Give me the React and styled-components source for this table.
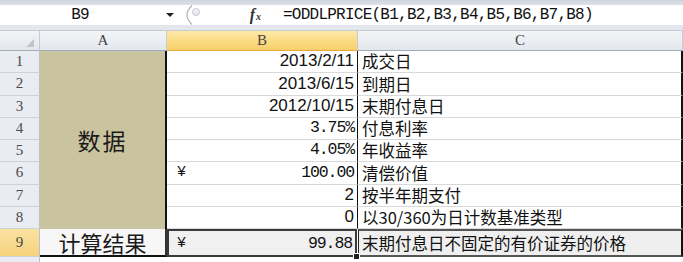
import React from "react";
import styled, { createGlobalStyle } from "styled-components";

const Global = createGlobalStyle`
  html, body { margin: 0; padding: 0; background: #fff; }
  body { width: 683px; height: 262px; overflow: hidden; }
`;

const CJK = `"Noto Sans CJK SC", "Noto Sans", sans-serif`;
const MONO = `"Liberation Mono", "DejaVu Sans Mono", monospace`;
const SERIF = `"Liberation Serif", serif`;

const Page = styled.div`
  width: 683px;
  height: 262px;
  overflow: hidden;
  background: #fff;
  display: flex;
  flex-direction: column;
`;

const TopBar = styled.div`
  height: 31px;
  box-sizing: border-box;
  padding: 5px 0 5px;
  background: linear-gradient(#cfd5dc, #dfe4ea 20%, #e4e8ee);
  border-bottom: 1px solid #c3cad3;
`;

const FormulaRow = styled.div`
  height: 20px;
  display: flex;
  align-items: center;
  background: #fff;
`;

const NameBox = styled.div`
  width: 160px;
  text-align: center;
  font-family: ${MONO};
  font-size: 16px;
  letter-spacing: -0.8px;
  color: #111;
`;

const Arrow = styled.div`
  width: 20px;
  display: flex;
  justify-content: center;
  &::before {
    content: "";
    border-left: 4px solid transparent;
    border-right: 4px solid transparent;
    border-top: 4px solid #222;
  }
`;

const Splitter = styled.div`
  width: 35px;
  height: 20px;
  display: flex;
  align-items: center;
`;

const FxBox = styled.div`
  width: 68px;
  display: flex;
  align-items: baseline;
  justify-content: flex-end;
  padding-right: 22px;
  box-sizing: border-box;
  font-family: ${SERIF};
  font-style: italic;
  font-weight: bold;
  font-size: 16px;
  color: #333;
`;

const FxSub = styled.span`
  font-size: 10px;
  margin-left: 1px;
`;

const FormulaText = styled.div`
  font-family: ${MONO};
  font-size: 16px;
  letter-spacing: -0.75px;
  color: #111;
  white-space: nowrap;
`;

const Sheet = styled.div`
  display: grid;
  grid-template-columns: 40px 127px 191px 325px;
  grid-template-rows: 20px repeat(8, 22.25px) 28px 1fr;
  flex: 1;
`;

const Corner = styled.div`
  background: linear-gradient(#f2f4f7, #e3e7ec);
  border-right: 1px solid #c5ccd4;
  border-bottom: 1px solid #9faebf;
  position: relative;
  &::after {
    content: "";
    position: absolute;
    right: 5px;
    bottom: 3px;
    border-left: 8px solid transparent;
    border-bottom: 8px solid #bfc5cd;
  }
`;

const ColHead = styled.div`
  display: flex;
  align-items: center;
  justify-content: center;
  box-sizing: border-box;
  font-family: ${SERIF};
  font-size: 15px;
  color: #444;
  border-right: 1px solid #c5ccd4;
  border-bottom: 1px solid ${(p) => (p.$active ? "#e8a93a" : "#9faebf")};
  background: ${(p) =>
    p.$active
      ? "linear-gradient(#fde9a8, #fbdc86 50%, #f8d06c)"
      : "linear-gradient(#f3f5f8, #e3e7ec)"};
`;

const RowHead = styled.div`
  display: flex;
  align-items: center;
  justify-content: center;
  box-sizing: border-box;
  font-family: ${SERIF};
  font-size: 15px;
  color: #4a4a4a;
  border-right: 1px solid #b9c1ca;
  border-bottom: 1px solid #cdd2d9;
  background: ${(p) =>
    p.$active ? "linear-gradient(#fbe2a2, #f6d27e)" : "#e9ecf0"};
`;

const Filler = styled.div`
  background: #e9ecf0;
  border-right: 1px solid #b9c1ca;
`;

const DataLabel = styled.div`
  background: #cac39f;
  border-right: 2px solid #111;
  display: flex;
  align-items: center;
  justify-content: center;
  box-sizing: border-box;
  font-family: ${CJK};
  font-size: 23px;
  letter-spacing: 2px;
  color: #1a1a1a;
`;

const ResultLabel = styled.div`
  background: #f7f7f7;
  border-right: 2px solid #333;
  border-bottom: 2px solid #111;
  display: flex;
  align-items: center;
  justify-content: center;
  box-sizing: border-box;
  font-family: ${CJK};
  font-size: 22px;
  color: #1a1a1a;
`;

const ValueCell = styled.div`
  display: flex;
  align-items: flex-end;
  justify-content: space-between;
  box-sizing: border-box;
  padding: 0 3px 1px 10px;
  line-height: 20px;
  border-right: 1px solid #111;
  border-bottom: 1px solid #d9d9d9;
  background: #fff;
  font-family: ${(p) => (p.$mono ? MONO : `"Liberation Sans", Arial, sans-serif`)};
  font-size: ${(p) => (p.$mono ? "16.5px" : "17px")};
  letter-spacing: ${(p) => (p.$mono ? "-1.1px" : "0")};
  color: #111;
`;

const Num = styled.span`
  margin-left: auto;
`;

const Yen = styled.span`
  font-family: ${MONO};
  font-size: 15px;
`;

const DescCell = styled.div`
  display: flex;
  align-items: flex-end;
  box-sizing: border-box;
  padding: 0 0 1px 4px;
  line-height: 20px;
  border-right: 2px solid #111;
  border-bottom: 1px solid #d9d9d9;
  background: #fff;
  font-family: ${CJK};
  font-size: 16.5px;
  color: #111;
  white-space: nowrap;
`;

const ActiveCell = styled.div`
  position: relative;
  display: flex;
  align-items: center;
  justify-content: space-between;
  box-sizing: border-box;
  padding: 0 3px 0 8px;
  background: #f0f0f0;
  border: 2px solid #3a3a3a;
  margin-right: 1px;
  font-family: ${MONO};
  font-size: 16.5px;
  letter-spacing: -1.1px;
  color: #111;
  &::after {
    content: "";
    position: absolute;
    right: -5px;
    bottom: -5px;
    width: 5px;
    height: 5px;
    background: #222;
    border: 1px solid #fff;
  }
`;

const ResultDesc = styled.div`
  display: flex;
  align-items: center;
  box-sizing: border-box;
  padding-left: 3px;
  background: #efefef;
  border-top: 2px solid #555;
  border-left: 1px solid #222;
  border-right: 2px solid #111;
  border-bottom: 2px solid #555;
  font-family: ${CJK};
  font-size: 16.5px;
  color: #111;
  white-space: nowrap;
`;

const Blank = styled.div`
  background: #fff;
`;

const rows = [
  { v: "2013/2/11", d: "成交日" },
  { v: "2013/6/15", d: "到期日" },
  { v: "2012/10/15", d: "末期付息日" },
  { v: "3.75%", d: "付息利率", mono: true },
  { v: "4.05%", d: "年收益率", mono: true },
  { v: "100.00", d: "清偿价值", mono: true, yen: true },
  { v: "2", d: "按半年期支付" },
  { v: "0", d: "以30/360为日计数基准类型" },
];

export default function App() {
  return (
    <Page>
      <Global />
      <TopBar>
        <FormulaRow>
          <NameBox>B9</NameBox>
          <Arrow />
          <Splitter>
            <svg width="35" height="20" viewBox="0 0 35 20">
              <defs>
                <linearGradient id="sp" x1="0" y1="0" x2="0" y2="1">
                  <stop offset="0" stopColor="#f4f5f7" />
                  <stop offset="1" stopColor="#dfe3e8" />
                </linearGradient>
              </defs>
              <path d="M12 0.5 Q2 10 12 19.5" fill="none" stroke="#a9b0b9" strokeWidth="1.2" />
              <circle cx="16" cy="7" r="3.5" fill="url(#sp)" stroke="#c7ccd3" strokeWidth="1" />
            </svg>
          </Splitter>
          <FxBox>
            f<FxSub>x</FxSub>
          </FxBox>
          <FormulaText>=ODDLPRICE(B1,B2,B3,B4,B5,B6,B7,B8)</FormulaText>
        </FormulaRow>
      </TopBar>
      <Sheet>
        <Corner />
        <ColHead>A</ColHead>
        <ColHead $active>B</ColHead>
        <ColHead>C</ColHead>

        {rows.map((r, i) => (
          <React.Fragment key={i}>
            <RowHead style={{ gridRow: i + 2, gridColumn: 1 }}>{i + 1}</RowHead>
            {i === 0 && <DataLabel style={{ gridRow: "2 / span 8", gridColumn: 2 }}>数据</DataLabel>}
            <ValueCell $mono={r.mono} style={{ gridRow: i + 2, gridColumn: 3 }}>
              {r.yen && <Yen>¥</Yen>}
              <Num>{r.v}</Num>
            </ValueCell>
            <DescCell style={{ gridRow: i + 2, gridColumn: 4 }}>{r.d}</DescCell>
          </React.Fragment>
        ))}

        <RowHead $active>9</RowHead>
        <ResultLabel>计算结果</ResultLabel>
        <ActiveCell>
          <Yen>¥</Yen>
          <span>99.88</span>
        </ActiveCell>
        <ResultDesc>末期付息日不固定的有价证券的价格</ResultDesc>

        <Filler />
        <Blank />
        <Blank />
        <Blank />
      </Sheet>
    </Page>
  );
}
